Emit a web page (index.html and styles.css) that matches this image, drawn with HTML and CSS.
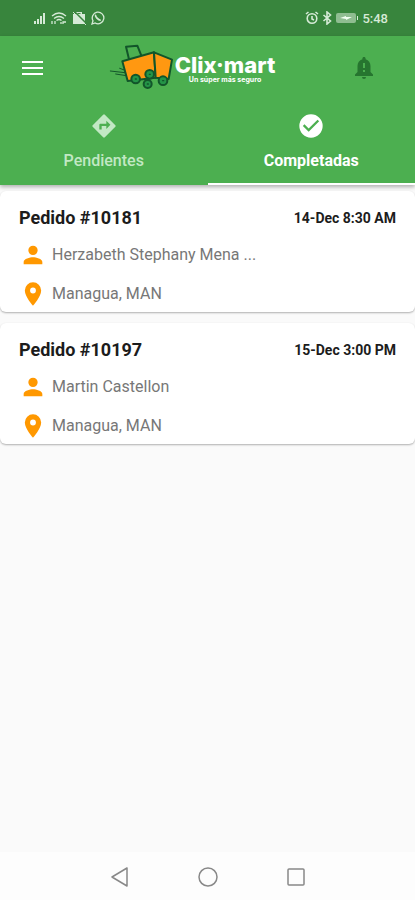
FILE: index.html
```html
<!DOCTYPE html>
<html lang="es">
<head>
<meta charset="utf-8">
<meta name="viewport" content="width=device-width, initial-scale=1">
<title>Clix-mart</title>
<link rel="stylesheet" href="styles.css">
</head>
<body>
<div class="status">
  <div class="status-group">
    <svg width="14" height="14" viewBox="0 0 14 14" fill="currentColor"><path d="M1 10h2v3H1zM4 8h2v5H4zM7 5h2v8H7zM10 2h2v11h-2z"/></svg>
    <svg width="16" height="14" viewBox="0 0 16 14" fill="none" stroke="currentColor" stroke-width="1.3"><path d="M1 5q7-6 14 0M3 7.500q5-4 10 0M5.500 9.500q2.500-2 5 0M1 10v3M4 10v3M12 13v-2h3M10 13v-2"/></svg>
    <svg width="16" height="14" viewBox="0 0 16 14"><path fill="currentColor" fill-rule="evenodd" d="M5 3V1h6v2h3v10H2V3zM6.500 3h3V2h-3z"/><path d="M4 1l12 12" stroke="#38853d" stroke-width="1.500"/><path d="M2 1l13 13" stroke="currentColor"/></svg>
    <svg width="14" height="14" viewBox="0 0 14 14" fill="none" stroke="currentColor" stroke-width="1.300"><path d="M1 13l1-3.200A5.800 5.800 0 1 1 4.200 12z"/><path stroke-width="1.800" d="M5 4q-1 1 1 3.200T9.700 9.200"/></svg>
  </div>
  <div class="status-group status-right">
    <svg width="14" height="14" viewBox="0 0 14 14" fill="none" stroke="currentColor" stroke-width="1.600"><circle cx="7" cy="7.500" r="4.800"/><path d="M7 5v3l2 1M1 3l2.500-2M13 3l-2.500-2"/></svg>
    <svg width="10" height="14" viewBox="0 0 10 14" fill="none" stroke="currentColor" stroke-width="1.600"><path d="M1.500 4l7 6L5 13V1l3.500 3-7 6"/></svg>
    <svg width="24" height="12" viewBox="0 0 24 12"><rect x="1" y="1" width="20" height="10" rx="2" fill="#8fbd91"/><path d="M22 4h1v4h-1z" fill="#d5ead6"/><path d="M5 6l6-2v1h6l-6 3V7z" fill="#f2fff2"/></svg>
    <span>5:48</span>
  </div>
</div>
<header class="header">
  <div class="bar">
    <button class="icon-button" aria-label="Menú"><svg width="24" height="24" viewBox="0 0 24 24" fill="#fff"><path d="M2 5h21v2H2zM2 11h21v2H2zM2 17h21v2H2z"/></svg></button>
    <div class="brand">
      <svg width="68" height="50" viewBox="0 3 204 150" stroke="#12552a" stroke-width="6" stroke-linejoin="round" stroke-linecap="round">
        <path d="M10 93l44 5M26 102l32 5M38 85l14 5" stroke-width="3"/>
        <path d="M66 58L57 20l34-3 12 30" fill="none"/>
        <path d="M46 64l95-27 5 76-84 10z" fill="#ff9811"/>
        <path d="M141 37l54 22-10 58-39-4z" fill="#ff9811"/>
        <g fill="#249447"><circle cx="122" cy="132" r="12"/><circle cx="86" cy="117" r="13"/><circle cx="128" cy="103" r="13"/><circle cx="168" cy="122" r="13"/></g>
        <path d="M85 117h3M127 103h3M121 132h3M167 122h3" stroke-width="4"/>
      </svg>
      <div class="wordmark"><span class="name">Clix·mart</span><span class="slogan">Un súper más seguro</span></div>
    </div>
    <button class="icon-button" aria-label="Notificaciones"><svg width="24" height="24" viewBox="0 0 24 24"><path fill="#26752f" d="M12 1c-1 0-1.600.700-1.600 1.600v.600C7.300 4 5.500 6.700 5.500 10v6L3 18.500V20h18v-1.500L18.500 16v-6c0-3.300-1.800-6-4.900-6.800v-.600C13.600 1.700 13 1 12 1zM10 21a2 2 0 0 0 4 0z"/><path d="M11 7h2v5h-2zM11 14h2v2h-2z" fill="#4caf50"/></svg></button>
  </div>
  <nav class="tabs">
    <a class="tab" href="#pendientes"><svg width="28" height="28" viewBox="0 0 24 24" fill="currentColor"><path d="M21.710 11.290l-9-9a1 1 0 0 0-1.410 0l-9 9a1 1 0 0 0 0 1.410l9 9a1 1 0 0 0 1.410 0l9-9a1 1 0 0 0 0-1.410zM14 14.500V12h-4v3H8v-4c0-.550.450-1 1-1h5V7.500l3.500 3.500z"/></svg><span>Pendientes</span></a>
    <a class="tab active" href="#completadas" aria-current="page"><svg width="28" height="28" viewBox="0 0 24 24" fill="currentColor"><path d="M12 2a10 10 0 1 0 0 20 10 10 0 0 0 0-20zm-2 15l-5-5 1.410-1.410L10 14.170l7.590-7.590L19 8z"/></svg><span>Completadas</span></a>
  </nav>
</header>
<main class="orders" id="completadas">
  <article class="card">
    <div class="card-head"><h2>Pedido #10181</h2><time>14-Dec 8:30 AM</time></div>
    <div class="row"><svg width="28" height="28" viewBox="0 0 24 24"><path d="M12 12a4 4 0 1 0 0-8 4 4 0 0 0 0 8zm0 2c-2.670 0-8 1.340-8 4v2h16v-2c0-2.660-5.330-4-8-4z"/></svg><span>Herzabeth Stephany Mena ...</span></div>
    <div class="row"><svg width="28" height="28" viewBox="0 0 24 24"><path d="M12 2a7 7 0 0 0-7 7c0 5.250 7 13 7 13s7-7.750 7-13a7 7 0 0 0-7-7zm0 9.500a2.500 2.500 0 1 1 0-5 2.500 2.500 0 0 1 0 5z"/></svg><span>Managua, MAN</span></div>
  </article>
  <article class="card">
    <div class="card-head"><h2>Pedido #10197</h2><time>15-Dec 3:00 PM</time></div>
    <div class="row"><svg width="28" height="28" viewBox="0 0 24 24"><path d="M12 12a4 4 0 1 0 0-8 4 4 0 0 0 0 8zm0 2c-2.670 0-8 1.340-8 4v2h16v-2c0-2.660-5.330-4-8-4z"/></svg><span>Martin Castellon</span></div>
    <div class="row"><svg width="28" height="28" viewBox="0 0 24 24"><path d="M12 2a7 7 0 0 0-7 7c0 5.250 7 13 7 13s7-7.750 7-13a7 7 0 0 0-7-7zm0 9.500a2.500 2.500 0 1 1 0-5 2.500 2.500 0 0 1 0 5z"/></svg><span>Managua, MAN</span></div>
  </article>
</main>
<footer class="system">
  <button class="icon-button" aria-label="Atrás"><svg width="24" height="24" viewBox="0 0 24 24"><path d="M4 13l15-9v18z"/></svg></button>
  <button class="icon-button" aria-label="Inicio"><svg width="24" height="24" viewBox="0 0 24 24"><circle cx="12" cy="13" r="9"/></svg></button>
  <button class="icon-button" aria-label="Recientes"><svg width="24" height="24" viewBox="0 0 24 24"><rect x="4" y="5" width="16" height="16" rx="1"/></svg></button>
</footer>
</body>
</html>
```

FILE: styles.css
```css
* { box-sizing: border-box; }
body {
  margin: 0;
  min-height: 100vh;
  display: flex;
  flex-direction: column;
  background: #fafafa;
  font-family: Roboto, "Liberation Sans", sans-serif;
  color: #1c1c1c;
}
svg { display: block; flex: none; }
.status {
  display: flex;
  justify-content: space-between;
  align-items: center;
  height: 36px;
  padding: 0 27px 0 33px;
  background: #38853d;
  color: #d5ead6;
  font-size: 13px;
  font-weight: 500;
}
.status-group { display: flex; align-items: center; gap: 4px; }
.status-right { gap: 3px; }
.header {
  background: #4caf50;
  box-shadow: 0 2px 4px rgba(0, 0, 0, 0.3);
}
.bar {
  display: grid;
  grid-template-columns: 24px 1fr 24px;
  align-items: center;
  height: 63px;
  padding: 0 39px 0 20px;
}
.icon-button {
  padding: 0;
  border: 0;
  background: none;
}
.brand {
  display: flex;
  justify-content: center;
  align-items: center;
  padding: 0 14px 4px 0;
  color: #fff;
}
.wordmark {
  display: flex;
  flex-direction: column;
  align-items: center;
  padding-top: 6px;
}
.name {
  font: 800 22px/22px Inter, sans-serif;
}
.slogan {
  font: 700 7px/7px Inter, sans-serif;
}
.tabs { display: grid; grid-template-columns: 1fr 1fr; }
.tab {
  display: flex;
  flex-direction: column;
  align-items: center;
  justify-content: space-between;
  height: 86px;
  padding: 13px 0 12px;
  border-bottom: 2px solid transparent;
  color: #c2e8c4;
  font-size: 16px;
  font-weight: 500;
  line-height: 20px;
  text-decoration: none;
}
.active { color: #fff; border-color: #fff; font-weight: 700; }
.orders {
  flex: 1;
  display: flex;
  flex-direction: column;
  gap: 11px;
  padding: 6px 0;
}
.card {
  display: flex;
  flex-direction: column;
  gap: 14px;
  padding: 17px 19px 6px;
  border-radius: 6px;
  background: #fff;
  box-shadow: 0 1px 2px rgba(0, 0, 0, 0.3);
}
.card-head { display: flex; justify-content: space-between; align-items: center; }
h2 {
  margin: 0;
  font-size: 18px;
  font-weight: 700;
  line-height: 20px;
}
time { font-size: 14px; font-weight: 700; }
.row {
  display: flex;
  align-items: center;
  gap: 5px;
  height: 25px;
  color: #777;
  font-size: 16px;
}
.row svg { fill: #ff9800; }
.system {
  display: flex;
  justify-content: center;
  align-items: center;
  gap: 64px;
  height: 48px;
  background: #fdfdfd;
}
.system svg { fill: none; stroke: #888; stroke-width: 1.5; stroke-linejoin: round; }
```
